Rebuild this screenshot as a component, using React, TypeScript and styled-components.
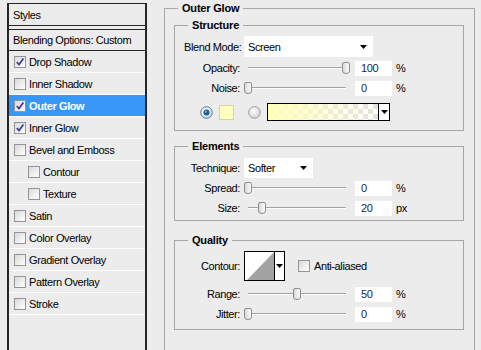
import React from 'react'
import styled, { createGlobalStyle } from 'styled-components'

type Effect = { name: string; checked: boolean; indent?: boolean }

const effects: Effect[] = [
  { name: 'Drop Shadow', checked: true },
  { name: 'Inner Shadow', checked: false },
  { name: 'Outer Glow', checked: true },
  { name: 'Inner Glow', checked: true },
  { name: 'Bevel and Emboss', checked: false },
  { name: 'Contour', checked: false, indent: true },
  { name: 'Texture', checked: false, indent: true },
  { name: 'Satin', checked: false },
  { name: 'Color Overlay', checked: false },
  { name: 'Gradient Overlay', checked: false },
  { name: 'Pattern Overlay', checked: false },
  { name: 'Stroke', checked: false },
]

const selectedEffect = 'Outer Glow'

const DownArrow: React.FC = () => (
  <svg width='7' height='4' viewBox='0 0 7 4'>
    <polygon points='0,0 7,0 3.5,4' fill='#000' />
  </svg>
)

const CheckBox: React.FC<{ on: boolean }> = ({ on }) => (
  <Box>
    {on && (
      <svg width='10' height='10' viewBox='0 0 10 10'>
        <path d='M1.8 5 L4 7.6 L8.4 1.6' stroke='#3a3aa6' strokeWidth='1.7' fill='none' />
      </svg>
    )}
  </Box>
)

const RadioButton: React.FC<{ on: boolean }> = ({ on }) => (
  <svg width='13' height='13' viewBox='0 0 13 13'>
    <defs>
      <radialGradient id={on ? 'rOn' : 'rOff'} cx='40%' cy='35%' r='70%'>
        <stop offset='0' stopColor='#ffffff' />
        <stop offset='1' stopColor={on ? '#c9d3dc' : '#cfcfcf'} />
      </radialGradient>
    </defs>
    <circle cx='6.5' cy='6.5' r='5.8' fill={`url(#${on ? 'rOn' : 'rOff'})`} stroke={on ? '#5c7c98' : '#9c9c9c'} />
    {on && <circle cx='6.5' cy='6.5' r='3' fill='#1f5e94' />}
    {on && <circle cx='5.8' cy='5.7' r='1' fill='#7fb8e6' />}
  </svg>
)

const Slider: React.FC<{ value: number; max: number }> = ({ value, max }) => (
  <Track>
    <Thumb style={{ left: `calc(${(value / max) * 100}% - 4px)` }}>
      <svg width='8' height='12' viewBox='0 0 8 12'>
        <defs>
          <linearGradient id='thumbFill' x1='0' y1='0' x2='1' y2='0'>
            <stop offset='0' stopColor='#d6d6d6' />
            <stop offset='1' stopColor='#ffffff' />
          </linearGradient>
        </defs>
        <path d='M2 0.5 H6 Q7.5 0.5 7.5 2 V9 Q7.5 11.5 4 11.5 Q0.5 11.5 0.5 9 V2 Q0.5 0.5 2 0.5 Z' fill='url(#thumbFill)' stroke='#8c8c8c' />
      </svg>
    </Thumb>
  </Track>
)

const SliderRow: React.FC<{ label: string; value: number; max: number; unit: string; mt?: number }> = ({ label, value, max, unit, mt }) => (
  <Row $h={20} $mt={mt}>
    <Label>{label}</Label>
    <Slider value={value} max={max} />
    <Value>{value}</Value>
    <Unit>{unit}</Unit>
  </Row>
)

const App: React.FC = () => (
  <>
    <GlobalStyle />
    <Window>
      <StylesPanel>
        <PanelHead>Styles</PanelHead>
        <PanelHead $second>Blending Options: Custom</PanelHead>
        {effects.map(({ name, checked, indent }) => (
          <EffectRow key={name} $indent={indent} $selected={name === selectedEffect}>
            <CheckBox on={checked} />
            <span>{name}</span>
          </EffectRow>
        ))}
      </StylesPanel>

      <OuterGroup>
        <Legend>Outer Glow</Legend>

        <SubGroup $mt={6} $pb={9}>
          <Legend>Structure</Legend>
          <Row $h={21}>
            <Label>Blend Mode:</Label>
            <Select $w={129}>
              <span>Screen</span>
              <DownArrow />
            </Select>
          </Row>
          <SliderRow label='Opacity:' value={100} max={100} unit='%' mt={1} />
          <SliderRow label='Noise:' value={0} max={100} unit='%' />
          <Row $h={18} $mt={5}>
            <ColorChoice>
              <RadioButton on />
              <Swatch />
              <RadioButton on={false} />
              <GradientBox>
                <GradientFill />
                <GradientArrow>
                  <DownArrow />
                </GradientArrow>
              </GradientBox>
            </ColorChoice>
          </Row>
        </SubGroup>

        <SubGroup $mt={10} $pb={2}>
          <Legend>Elements</Legend>
          <Row $h={20} $mt={1}>
            <Label>Technique:</Label>
            <Select $w={69}>
              <span>Softer</span>
              <DownArrow />
            </Select>
          </Row>
          <SliderRow label='Spread:' value={0} max={100} unit='%' />
          <SliderRow label='Size:' value={20} max={140} unit='px' />
        </SubGroup>

        <SubGroup $mt={14} $pb={5}>
          <Legend>Quality</Legend>
          <Row $h={30}>
            <Label>Contour:</Label>
            <ContourBox>
              <svg width='29' height='28' viewBox='0 0 29 28'>
                <polygon points='2,28 29,28 29,0' fill='#a3a3a3' />
              </svg>
              <ContourArrow>
                <DownArrow />
              </ContourArrow>
            </ContourBox>
            <AntiAlias>
              <CheckBox on={false} />
              <span>Anti-aliased</span>
            </AntiAlias>
          </Row>
          <SliderRow label='Range:' value={50} max={100} unit='%' mt={3} />
          <SliderRow label='Jitter:' value={0} max={100} unit='%' />
        </SubGroup>
      </OuterGroup>
    </Window>
  </>
)

const GlobalStyle = createGlobalStyle`
  html, body {
    margin: 0;
    padding: 0;
    background: #ececec;
  }

  body {
    font-family: 'Liberation Sans', Arial, sans-serif;
    font-size: 11px;
    letter-spacing: -0.4px;
    color: #000;
  }
`

const Window = styled.div`
  display: flex;
  align-items: flex-start;
  gap: 17px;
  height: 350px;
  padding: 3px 0 0 7px;
  box-sizing: border-box;
  overflow: hidden;
  background: #ececec;
`

const StylesPanel = styled.div`
  width: 140px;
  min-height: 370px;
  flex: none;
  box-sizing: border-box;
  border: 1px solid #262626;
  border-left-width: 2px;
  border-right-width: 2px;
  display: flex;
  flex-direction: column;
`

const PanelHead = styled.div<{ $second?: boolean }>`
  height: 21px;
  display: flex;
  align-items: center;
  padding-left: 4px;
  border-bottom: 1px solid #262626;
  ${p => (p.$second ? 'height: 20px; margin-top: 3px; border-top: 1px solid #262626;' : '')}
`

const EffectRow = styled.div<{ $indent?: boolean; $selected?: boolean }>`
  height: 21px;
  display: flex;
  align-items: center;
  gap: 3px;
  padding-left: ${p => (p.$indent ? 19 : 5)}px;
  border-bottom: 1px solid #fff;
  background: ${p => (p.$selected ? '#3797f7' : 'transparent')};
  color: ${p => (p.$selected ? '#fff' : '#000')};
  font-weight: ${p => (p.$selected ? 'bold' : 'normal')};
`

const Box = styled.span`
  width: 12px;
  height: 12px;
  flex: none;
  box-sizing: border-box;
  border: 1px solid #949494;
  background: linear-gradient(135deg, #d9d9d9, #ffffff);
  display: inline-flex;
  align-items: center;
  justify-content: center;
`

const OuterGroup = styled.fieldset`
  width: 311px;
  min-height: 400px;
  flex: none;
  box-sizing: border-box;
  margin: 0;
  padding: 0 10px 0 9px;
  border: 1px solid #a6a6a6;
`

const Legend = styled.legend`
  font-weight: bold;
  letter-spacing: -0.2px;
  line-height: 11px;
  padding: 0 4px;
  margin-left: 4px;
`

const SubGroup = styled.fieldset<{ $mt: number; $pb: number }>`
  margin: ${p => p.$mt}px 0 0;
  padding: 5px 8px ${p => p.$pb}px 9px;
  border: 1px solid #a6a6a6;
`

const Row = styled.div<{ $h: number; $mt?: number }>`
  display: flex;
  align-items: center;
  height: ${p => p.$h}px;
  margin-top: ${p => p.$mt ?? 0}px;
`

const Label = styled.span`
  width: 56px;
  flex: none;
  margin-right: 4px;
  text-align: right;
  white-space: nowrap;
`

const Select = styled.div<{ $w: number }>`
  width: ${p => p.$w}px;
  height: 100%;
  box-sizing: border-box;
  display: flex;
  align-items: center;
  justify-content: space-between;
  padding: 0 6px 0 4px;
  background: #fff;
`

const Track = styled.div`
  position: relative;
  width: 98px;
  height: 100%;
  flex: none;
  margin-left: 4px;

  &::before {
    content: '';
    position: absolute;
    left: 0;
    right: 0;
    top: 9px;
    height: 1px;
    background: #a3a3a3;
    border-bottom: 1px solid #fff;
  }
`

const Thumb = styled.span`
  position: absolute;
  top: 4px;
  display: flex;
`

const Value = styled.span`
  width: 37px;
  height: 15px;
  margin-left: 9px;
  box-sizing: border-box;
  padding-left: 6px;
  display: flex;
  align-items: center;
  background: #fff;
  color: #14264e;
`

const Unit = styled.span`
  margin-left: 4px;
`

const ColorChoice = styled.div`
  display: flex;
  align-items: center;
  margin-left: 16px;

  & > svg:nth-of-type(2) {
    margin-left: 14px;
  }
`

const Swatch = styled.span`
  width: 15px;
  height: 15px;
  margin-left: 6px;
  box-sizing: border-box;
  border: 1px solid #d4d2a8;
  background: #ffffbe;
`

const GradientBox = styled.div`
  display: flex;
  width: 123px;
  height: 18px;
  margin-left: 6px;
  box-sizing: border-box;
  border: 1px solid #000;
`

const GradientFill = styled.div`
  flex: 1;
  background:
    linear-gradient(to right, #ffffbc, rgba(255, 255, 188, 0)),
    conic-gradient(#e2e2e2 25%, #fff 0 50%, #e2e2e2 0 75%, #fff 0) 0 0 / 10px 10px;
`

const GradientArrow = styled.div`
  width: 10px;
  display: flex;
  align-items: center;
  justify-content: center;
  border-left: 1px solid #000;
  background: #fff;
`

const ContourBox = styled.div`
  display: flex;
  width: 41px;
  height: 30px;
  box-sizing: border-box;
  border: 1px solid #000;
  background: #fff;
`

const ContourArrow = styled.div`
  flex: 1;
  display: flex;
  align-items: center;
  justify-content: center;
  border-left: 1px solid #000;
`

const AntiAlias = styled.label`
  display: flex;
  align-items: center;
  gap: 4px;
  margin-left: 13px;
`

export default App
